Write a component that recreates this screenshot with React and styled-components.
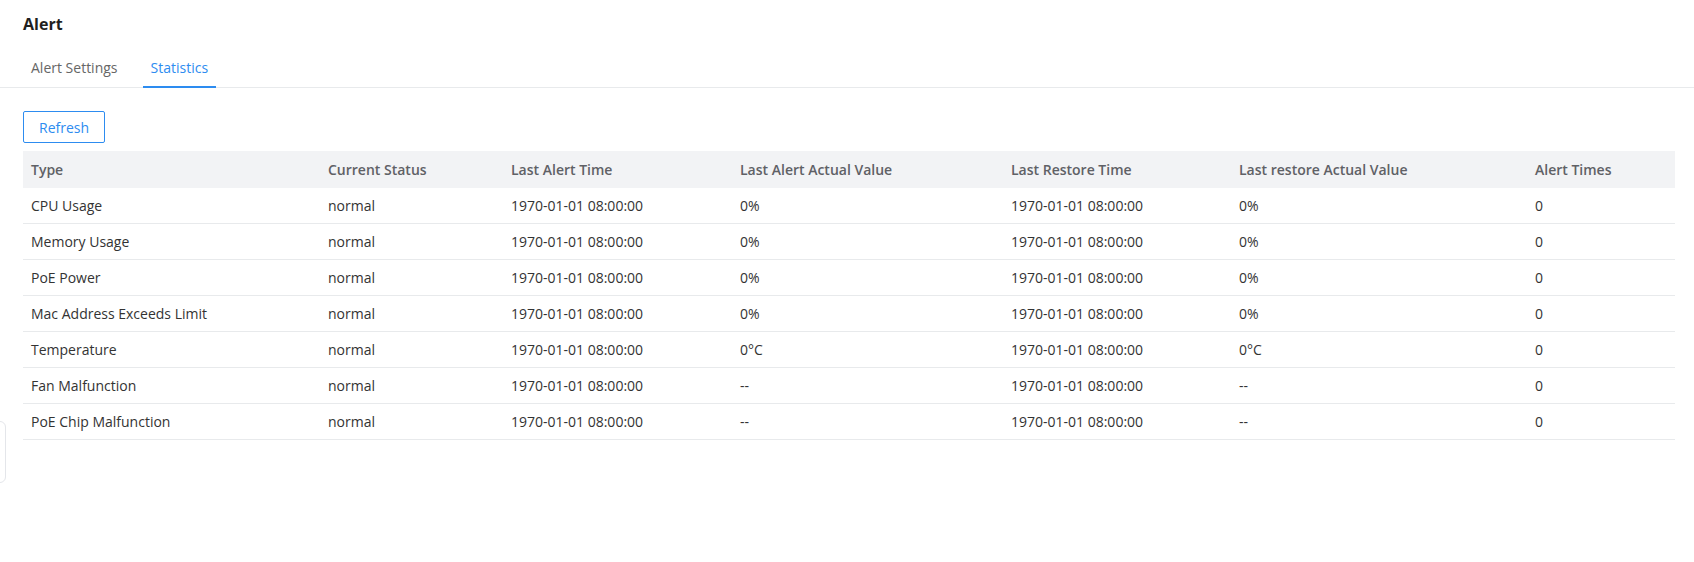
import React from 'react';
import styled, { createGlobalStyle } from 'styled-components';

const GlobalStyle = createGlobalStyle`
  html, body {
    margin: 0;
    padding: 0;
    background: #fff;
    font-family: "Open Sans", "Noto Sans", sans-serif;
    font-size: 14px;
    color: #333;
  }
`;

const Page = styled.div`
  position: relative;
  min-height: 562px;
  overflow: hidden;
`;

const Title = styled.h1`
  margin: 0;
  padding: 12px 23px 0;
  font-size: 16px;
  line-height: 24px;
  font-weight: 700;
  color: #1f1f1f;
`;

const TabBar = styled.div`
  display: flex;
  gap: 17px;
  margin-top: 11px;
  padding: 0 23px;
  height: 40px;
  border-bottom: 1px solid #e8eaec;
`;

const Tab = styled.div`
  position: relative;
  display: flex;
  align-items: center;
  padding: 0 8px;
  color: ${p => (p.active ? '#2d8cf0' : '#666')};
  cursor: pointer;

  &::after {
    content: '';
    position: absolute;
    left: 0;
    right: 0;
    bottom: -1px;
    height: 2px;
    background: ${p => (p.active ? '#2d8cf0' : 'transparent')};
  }
`;

const Content = styled.div`
  padding: 23px 19px 0 23px;
`;

const Button = styled.button`
  height: 32px;
  padding: 0 15px;
  border: 1px solid #2d8cf0;
  border-radius: 2px;
  background: #fff;
  color: #2d8cf0;
  font-family: inherit;
  font-size: 14px;
  cursor: pointer;
`;

const Table = styled.table`
  width: 100%;
  margin-top: 8px;
  border-collapse: collapse;
  table-layout: fixed;
`;

const Th = styled.th`
  height: 36px;
  padding: 0 8px 1px;
  text-align: left;
  font-weight: 600;
  color: #5f6166;
  background: #f2f3f5;
  white-space: nowrap;
`;

const Td = styled.td`
  height: 35px;
  padding: 0 8px;
  color: #333;
  border-bottom: 1px solid #e8eaec;
  white-space: nowrap;
`;

const SideHandle = styled.div`
  position: absolute;
  left: -30px;
  top: 421px;
  width: 36px;
  height: 62px;
  border: 1px solid #e4e6ea;
  border-radius: 6px;
  background: #fff;
  display: flex;
  align-items: center;
  justify-content: flex-end;
  padding-right: 5px;
  box-sizing: border-box;
`;

const columns = [
  { key: 'type', label: 'Type', width: 297 },
  { key: 'status', label: 'Current Status', width: 183 },
  { key: 'alertTime', label: 'Last Alert Time', width: 229 },
  { key: 'alertValue', label: 'Last Alert Actual Value', width: 271 },
  { key: 'restoreTime', label: 'Last Restore Time', width: 228 },
  { key: 'restoreValue', label: 'Last restore Actual Value', width: 296 },
  { key: 'times', label: 'Alert Times', width: 148 },
];

const epoch = '1970-01-01 08:00:00';

const rows = [
  ['CPU Usage', '0%'],
  ['Memory Usage', '0%'],
  ['PoE Power', '0%'],
  ['Mac Address Exceeds Limit', '0%'],
  ['Temperature', '0°C'],
  ['Fan Malfunction', '--'],
  ['PoE Chip Malfunction', '--'],
].map(([type, value]) => ({
  type,
  status: 'normal',
  alertTime: epoch,
  alertValue: value,
  restoreTime: epoch,
  restoreValue: value,
  times: '0',
}));

const App = () => {
  return (
    <Page>
      <GlobalStyle />
      <Title>Alert</Title>
      <TabBar>
        <Tab>Alert Settings</Tab>
        <Tab active>Statistics</Tab>
      </TabBar>
      <Content>
        <Button>Refresh</Button>
        <Table>
          <colgroup>
            {columns.map(c => (
              <col key={c.key} style={{ width: c.width }} />
            ))}
          </colgroup>
          <thead>
            <tr>
              {columns.map(c => (
                <Th key={c.key}>{c.label}</Th>
              ))}
            </tr>
          </thead>
          <tbody>
            {rows.map(r => (
              <tr key={r.type}>
                {columns.map(c => (
                  <Td key={c.key}>{r[c.key]}</Td>
                ))}
              </tr>
            ))}
          </tbody>
        </Table>
      </Content>
      <SideHandle>
        <svg width="4" height="10" viewBox="0 0 4 10">
          <path d="M1 1 L3 5 L1 9" fill="none" stroke="#2d8cf0" strokeWidth="1.2" />
        </svg>
      </SideHandle>
    </Page>
  );
};

export default App;
